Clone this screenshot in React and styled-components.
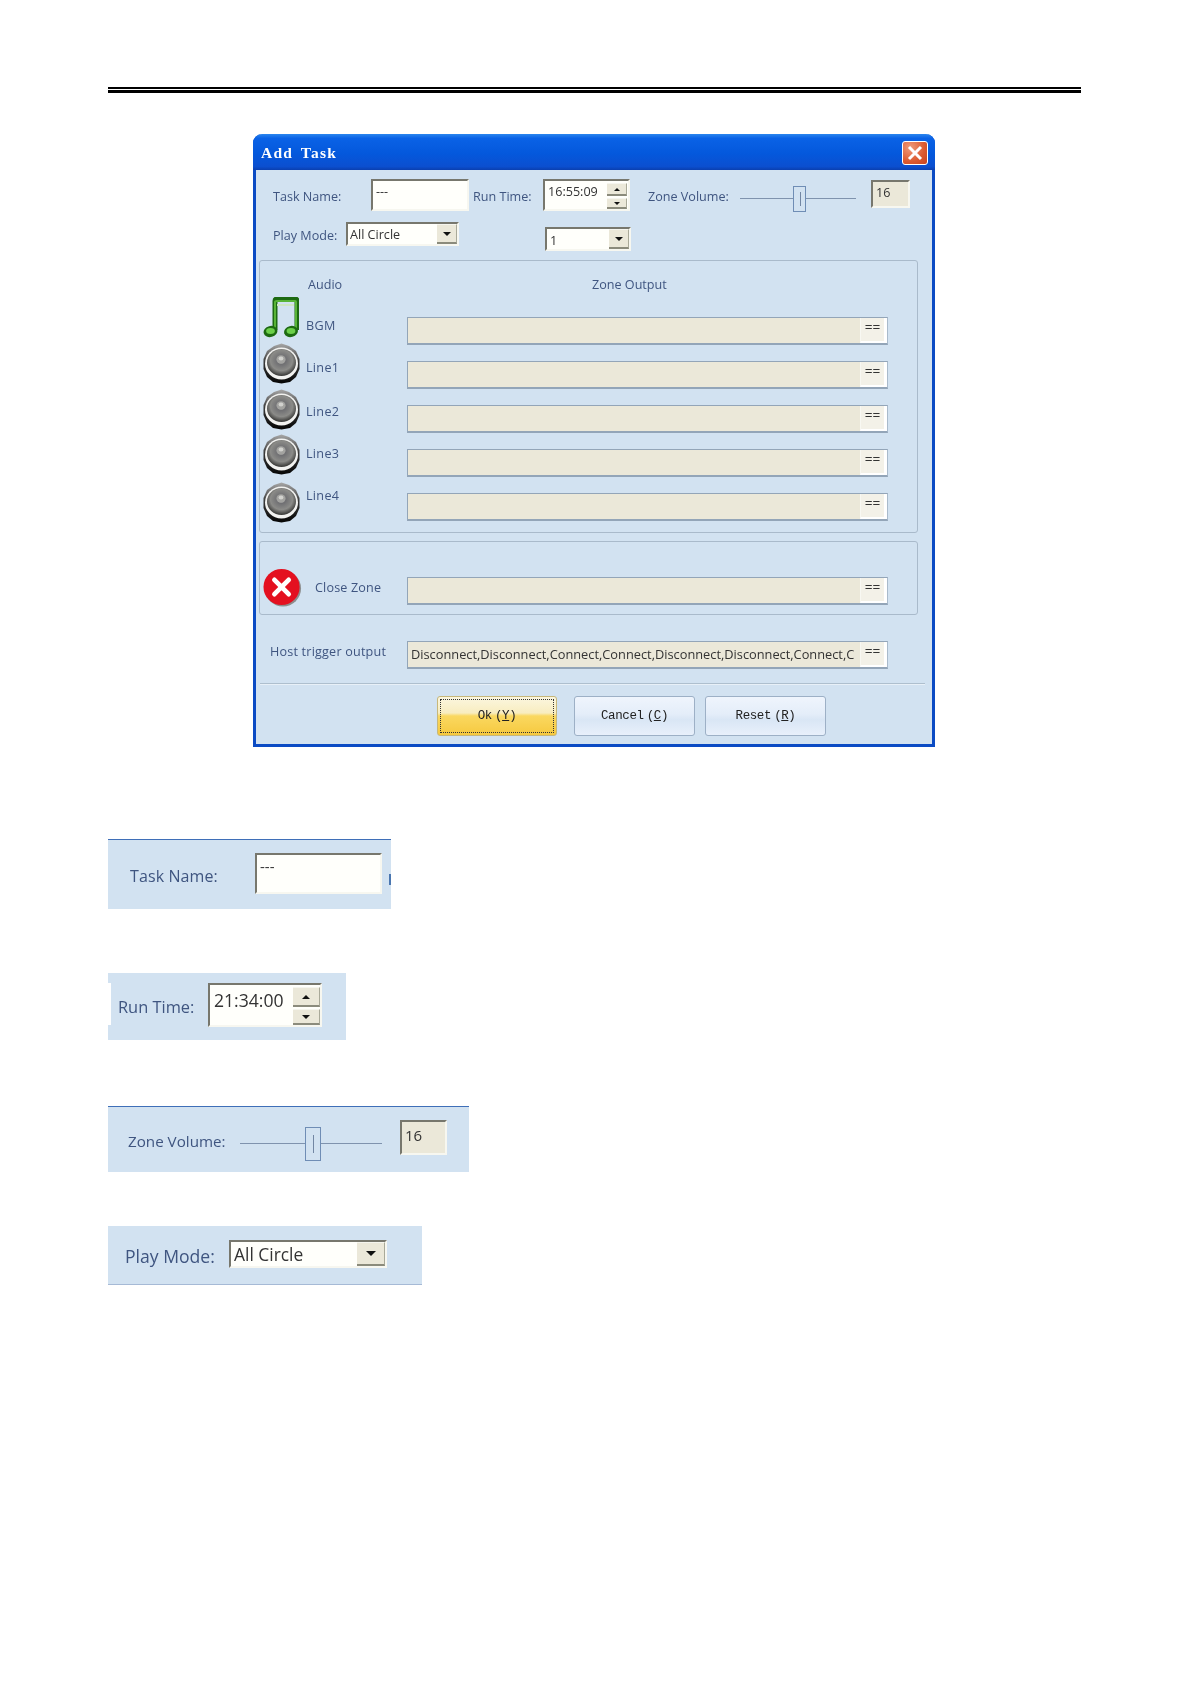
import styled, { createGlobalStyle } from 'styled-components';

const labelColor = '#3f5580';
const panelColor = '#d2e2f1';
const uiFont = '"Open Sans", "Noto Sans", sans-serif';

const GlobalStyle = createGlobalStyle`
    html, body {
        margin: 0;
        padding: 0;
        background: #fff;
    }
    body {
        font-family: ${uiFont};
    }
`;

const Page = styled.div`
    width: 1191px;
    height: 1684px;
    padding-top: 87px;
    box-sizing: border-box;
    overflow: hidden;
`;

const DoubleRule = styled.div`
    width: 973px;
    height: 6px;
    margin-left: 108px;
    border-top: 2px solid #000;
    border-bottom: 3px solid #000;
    box-sizing: border-box;
`;

const Window = styled.div`
    width: 682px;
    height: 613px;
    margin: 41px 0 0 253px;
    box-sizing: border-box;
    background: ${panelColor};
    border: 3px solid #0b4bc4;
    border-top: 0;
    border-radius: 9px 9px 0 0;
    filter: blur(0.4px);
`;

const TitleBar = styled.div`
    height: 36px;
    margin: 0 -3px;
    padding: 2px 7px 0 8px;
    box-sizing: border-box;
    display: flex;
    align-items: center;
    justify-content: space-between;
    border-radius: 9px 9px 0 0;
    background: linear-gradient(#2b86ee 0, #0a62e6 12%, #0458dc 55%, #0b4fd0 90%, #0a3fb0 100%);
`;

const Title = styled.span`
    font-family: "Liberation Serif", serif;
    font-weight: bold;
    font-size: 15.5px;
    letter-spacing: 1.2px;
    word-spacing: 3px;
    color: #fff;
    white-space: pre;
`;

const CloseButton = styled.div`
    width: 26px;
    height: 24px;
    box-sizing: border-box;
    border: 1px solid #fff;
    border-radius: 3px;
    background: radial-gradient(circle at 30% 25%, #ef9b7c, #dc5a30 60%, #c8431e);
    display: flex;
    align-items: center;
    justify-content: center;
`;

const Row = styled.div`
    display: flex;
    align-items: flex-start;
    box-sizing: border-box;
    height: ${({ $h }) => $h}px;
    padding-left: ${({ $pad }) => $pad || 0}px;
    padding-top: ${({ $pt }) => $pt || 0}px;
    margin-top: ${({ $mt }) => $mt || 0}px;
`;

const Label = styled.div`
    flex: none;
    width: ${({ $w }) => ($w ? `${$w}px` : 'auto')};
    margin-left: ${({ $ml }) => $ml || 0}px;
    margin-top: ${({ $mt }) => $mt || 0}px;
    font-size: ${({ $size }) => $size || 12.6}px;
    letter-spacing: ${({ $track }) => $track || 0}px;
    line-height: 16px;
    color: ${labelColor};
    white-space: nowrap;
`;

const Sunken = styled.div`
    flex: none;
    position: relative;
    box-sizing: border-box;
    width: ${({ $w }) => $w}px;
    height: ${({ $h }) => $h}px;
    margin-left: ${({ $ml }) => $ml || 0}px;
    margin-top: ${({ $mt }) => $mt || 0}px;
    padding: ${({ $pad }) => $pad || '3px 3px'};
    background: ${({ $readonly }) => ($readonly ? '#ebe8d9' : '#fffffb')};
    border-style: solid;
    border-width: 2px;
    border-color: #77776d #f7f7f0 #f7f7f0 #77776d;
    font-size: ${({ $size }) => $size || 12.6}px;
    line-height: ${({ $lh }) => $lh || 16}px;
    color: #333;
    white-space: nowrap;
    overflow: hidden;
`;

const RaisedButton = styled.div`
    position: absolute;
    right: ${({ $right }) => $right}px;
    top: ${({ $top }) => $top}px;
    width: ${({ $w }) => $w}px;
    height: ${({ $h }) => $h}px;
    box-sizing: border-box;
    background: #ebe8d9;
    border-bottom: 2px solid #8b8b7c;
    border-right: 1px solid #a9a998;
    border-top: 1px solid #f5f5ee;
    display: flex;
    align-items: center;
    justify-content: center;

    &::after {
        content: '';
        border-left: ${({ $arrow }) => $arrow}px solid transparent;
        border-right: ${({ $arrow }) => $arrow}px solid transparent;
        ${({ $up, $arrow }) =>
            $up
                ? `border-bottom: ${$arrow}px solid #111;`
                : `border-top: ${$arrow}px solid #111;`}
    }
`;

const Slider = styled.div`
    flex: none;
    position: relative;
    width: ${({ $w }) => $w}px;
    height: ${({ $h }) => $h}px;
    margin-left: ${({ $ml }) => $ml || 0}px;
    margin-top: ${({ $mt }) => $mt || 0}px;

    &::before {
        content: '';
        position: absolute;
        left: 0;
        right: 0;
        top: 48%;
        height: 1px;
        background: #7f93ae;
    }
`;

const SliderThumb = styled.div`
    position: absolute;
    left: ${({ $left }) => $left}px;
    top: 0;
    bottom: 0;
    width: ${({ $w }) => $w}px;
    box-sizing: border-box;
    background: ${panelColor};
    border: 1px solid #6f8db5;

    &::after {
        content: '';
        position: absolute;
        left: 50%;
        top: 22%;
        bottom: 22%;
        width: 1px;
        background: #7286a3;
    }
`;

const Group = styled.div`
    width: 659px;
    height: ${({ $h }) => $h}px;
    margin: ${({ $mt }) => $mt || 0}px 0 0 3px;
    box-sizing: border-box;
    border: 1px solid #a9bacb;
    border-radius: 3px;
    padding-top: ${({ $pt }) => $pt || 0}px;
`;

const GroupHeader = styled.div`
    display: flex;
    height: 36px;
    padding: 16px 0 0 48px;
    box-sizing: border-box;
`;

const Columns = styled.div`
    display: flex;
    align-items: flex-start;
`;

const IconColumn = styled.div`
    flex: none;
    width: 42px;
    padding-left: 3px;
    box-sizing: border-box;
    display: flex;
    flex-direction: column;
`;

const IconSlot = styled.div`
    display: flex;
    margin-top: ${({ $mt }) => $mt || 0}px;

    svg {
        display: block;
    }
`;

const LabelColumn = styled.div`
    flex: none;
    width: 105px;
    padding: 21px 0 0 4px;
    box-sizing: border-box;
    display: flex;
    flex-direction: column;
    gap: 26px;
`;

const FieldColumn = styled.div`
    flex: none;
    padding-top: 20px;
    display: flex;
    flex-direction: column;
    gap: 16px;
`;

const ZoneField = styled.div`
    flex: none;
    width: 481px;
    height: 28px;
    margin-left: ${({ $ml }) => $ml || 0}px;
    margin-top: ${({ $mt }) => $mt || 0}px;
    box-sizing: border-box;
    display: flex;
    background: #ebe8d9;
    border: 1px solid #93a5b8;
    border-bottom: 2px solid #93a5b8;
    border-right: 1px solid #a9bacb;
`;

const ZoneText = styled.div`
    flex: 1;
    min-width: 0;
    overflow: hidden;
    padding-left: 3px;
    font-size: 12.8px;
    line-height: 24px;
    color: #333;
    white-space: nowrap;
`;

const ZoneButton = styled.div`
    flex: none;
    width: 27px;
    font-family: "Liberation Mono", monospace;
    font-size: 13px;
    line-height: 20px;
    text-align: center;
    color: #333;
    background: #f3f1e8;
    border-left: 1px solid #f8f8f2;
    border-right: 3px solid #fff;
    border-bottom: 2px solid #fff;
    box-sizing: border-box;
`;

const Divider = styled.div`
    width: 665px;
    height: 2px;
    margin: 14px 0 0 4px;
    background: linear-gradient(#aebfce 50%, #e8f0f8 50%);
`;

const ButtonBar = styled.div`
    display: flex;
    margin-top: 11px;
    padding-left: 181px;
`;

const DialogButton = styled.div`
    width: ${({ $w }) => $w}px;
    height: 40px;
    margin-left: ${({ $ml }) => $ml || 0}px;
    box-sizing: border-box;
    border: 1px solid ${({ $primary }) => ($primary ? '#c7b77a' : '#9db0c6')};
    border-radius: 3px;
    padding: 2px;
    background: ${({ $primary }) =>
        $primary
            ? 'linear-gradient(#fbf6df 0, #f8edc0 42%, #fad860 50%, #f6c93f 100%)'
            : 'linear-gradient(#eff5fd 0, #e4edf9 45%, #d9e6f5 60%, #e8f0fb 100%)'};
    font-family: "Liberation Mono", monospace;
    font-size: 12.5px;
    letter-spacing: -0.4px;
    word-spacing: -4px;
    color: #222;
`;

const ButtonFace = styled.div`
    height: 100%;
    box-sizing: border-box;
    display: flex;
    align-items: center;
    justify-content: center;
    white-space: pre;
    border: 1px dotted ${({ $focus }) => ($focus ? '#333' : 'transparent')};
`;

const CropPanel = styled.div`
    width: ${({ $w }) => $w}px;
    height: ${({ $h }) => $h}px;
    margin: ${({ $mt }) => $mt}px 0 0 108px;
    padding-left: ${({ $pad }) => $pad}px;
    box-sizing: border-box;
    display: flex;
    align-items: flex-start;
    background: ${panelColor};
    border-top: ${({ $line }) => ($line ? '1px solid #3f6fb8' : '0')};
    border-bottom: ${({ $under }) => ($under ? '1px solid #a6bad6' : '0')};
    position: relative;
    filter: blur(0.6px);
`;

const EdgeTick = styled.div`
    position: absolute;
    right: 0;
    top: 34px;
    width: 2px;
    height: 11px;
    background: #4a76b0;
`;

const EdgeNotch = styled.div`
    position: absolute;
    left: 0;
    top: 10px;
    width: 3px;
    height: 42px;
    background: #fff;
`;

const NoteIcon = () => (
    <svg width="36" height="41" viewBox="0 0 36 41">
        <path
            d="M12 33 V4 Q12 2 14 2 H32 Q34 2 34 4 V33"
            fill="none"
            stroke="#1d6a12"
            strokeWidth="5"
        />
        <path d="M12 33 V5 Q12 4 14 4 H32 Q33 4 33 5 V33" fill="none" stroke="#58b437" strokeWidth="2" />
        <rect x="14" y="7" width="17" height="2" fill="#cfe6c4" />
        <ellipse cx="7.5" cy="34.5" rx="7" ry="5.5" fill="#1d6a12" transform="rotate(-15 7.5 34.5)" />
        <ellipse cx="28" cy="34.5" rx="7" ry="5.5" fill="#1d6a12" transform="rotate(-15 28 34.5)" />
        <ellipse cx="7.5" cy="34" rx="4.4" ry="3" fill="#6cd04a" />
        <ellipse cx="28" cy="34" rx="4.4" ry="3" fill="#6cd04a" />
    </svg>
);

const SpeakerIcon = () => (
    <svg width="37" height="41" viewBox="0 0 37 41">
        <defs>
            <linearGradient id="speakerRim" x1="0" y1="0" x2="0" y2="1">
                <stop offset="0" stopColor="#a8a8a8" />
                <stop offset="0.45" stopColor="#3a3a3a" />
                <stop offset="1" stopColor="#050505" />
            </linearGradient>
            <radialGradient id="speakerCone" cx="0.5" cy="0.42" r="0.56">
                <stop offset="0" stopColor="#bcbcb9" />
                <stop offset="0.26" stopColor="#6f6f72" />
                <stop offset="0.68" stopColor="#8b8b88" />
                <stop offset="1" stopColor="#3e3e3c" />
            </radialGradient>
        </defs>
        <path
            d="M18.5 0.5 L26 3 L33 8 L36.5 16 L36.5 26 L33 34 L27 39 L18.5 40.5 L10 39 L4 34 L0.5 26 L0.5 16 L4 8 L11 3 Z"
            fill="url(#speakerRim)"
        />
        <ellipse cx="18.5" cy="20.5" rx="16.5" ry="16" fill="#f2f2f0" />
        <ellipse cx="18.5" cy="19.5" rx="14.5" ry="13.5" fill="url(#speakerCone)" />
        <ellipse cx="18" cy="16.5" rx="4.6" ry="4.2" fill="#a3a3a0" />
        <ellipse cx="18" cy="15.5" rx="2.4" ry="2" fill="#d2d2ce" />
    </svg>
);

const CloseZoneIcon = () => (
    <svg width="41" height="41" viewBox="0 0 41 41">
        <circle cx="21" cy="21.5" r="19" fill="#8d8d8d" />
        <circle cx="19.5" cy="20" r="19" fill="#e41020" />
        <path d="M12 12.5 L27 27.5 M27 12.5 L12 27.5" stroke="#fff" strokeWidth="5" strokeLinecap="round" />
    </svg>
);

const audioRows = ['BGM', 'Line1', 'Line2', 'Line3', 'Line4'];
const speakerOffsets = [5, 5, 4, 7];
const triggerText = 'Disconnect,Disconnect,Connect,Connect,Disconnect,Disconnect,Connect,C';

const ZoneBox = ({ text, ...props }) => (
    <ZoneField {...props}>
        <ZoneText>{text}</ZoneText>
        <ZoneButton>==</ZoneButton>
    </ZoneField>
);

export default function App() {
    return (
        <Page>
            <GlobalStyle />
            <DoubleRule />

            <Window>
                <TitleBar>
                    <Title>Add Task</Title>
                    <CloseButton>
                        <svg width="16" height="16" viewBox="0 0 16 16">
                            <path d="M2 2 L14 14 M14 2 L2 14" stroke="#fff" strokeWidth="3" />
                        </svg>
                    </CloseButton>
                </TitleBar>

                <Row $h={52} $pad={17} $pt={9}>
                    <Label $w={98} $mt={10}>Task Name:</Label>
                    <Sunken $w={98} $h={32}>---</Sunken>
                    <Label $w={70} $ml={4} $mt={10}>Run Time:</Label>
                    <Sunken $w={87} $h={32}>
                        16:55:09
                        <RaisedButton $up $right={1} $top={2} $w={20} $h={13} $arrow={3} />
                        <RaisedButton $right={1} $top={17} $w={20} $h={11} $arrow={3} />
                    </Sunken>
                    <Label $w={92} $ml={18} $mt={10}>Zone Volume:</Label>
                    <Slider $w={116} $h={26} $mt={7}>
                        <SliderThumb $left={53} $w={13} />
                    </Slider>
                    <Sunken $w={39} $h={28} $ml={15} $mt={1} $readonly>16</Sunken>
                </Row>

                <Row $h={38} $pad={17}>
                    <Label $w={73} $mt={6}>Play Mode:</Label>
                    <Sunken $w={113} $h={24} $pad="3px 2px">
                        All Circle
                        <RaisedButton $right={0} $top={0} $w={20} $h={20} $arrow={4} />
                    </Sunken>
                    <Sunken $w={86} $h={24} $ml={86} $mt={5} $pad="4px 3px">
                        1
                        <RaisedButton $right={0} $top={0} $w={20} $h={20} $arrow={4} />
                    </Sunken>
                </Row>

                <Group $h={273}>
                    <GroupHeader>
                        <Label $w={284}>Audio</Label>
                        <Label>Zone Output</Label>
                    </GroupHeader>
                    <Columns>
                        <IconColumn>
                            <IconSlot><NoteIcon /></IconSlot>
                            {speakerOffsets.map((offset, i) => (
                                <IconSlot key={i} $mt={offset}><SpeakerIcon /></IconSlot>
                            ))}
                        </IconColumn>
                        <LabelColumn>
                            {audioRows.map((name) => (
                                <Label key={name} $track={0.3} $mt={name === 'Line2' ? 2 : 0}>{name}</Label>
                            ))}
                        </LabelColumn>
                        <FieldColumn>
                            {audioRows.map((name) => (
                                <ZoneBox key={name} />
                            ))}
                        </FieldColumn>
                    </Columns>
                </Group>

                <Group $h={74} $mt={8} $pt={25}>
                    <Columns>
                        <IconColumn>
                            <IconSlot><CloseZoneIcon /></IconSlot>
                        </IconColumn>
                        <Label $w={92} $ml={13} $mt={13} $track={0.15}>Close Zone</Label>
                        <ZoneBox $mt={10} />
                    </Columns>
                </Group>

                <Row $h={28} $pad={14} $mt={26}>
                    <Label $w={137} $mt={3} $track={0.2}>Host trigger output</Label>
                    <ZoneBox text={triggerText} />
                </Row>

                <Divider />

                <ButtonBar>
                    <DialogButton $w={120} $primary>
                        <ButtonFace $focus>Ok (<u>Y</u>)</ButtonFace>
                    </DialogButton>
                    <DialogButton $w={121} $ml={17}>
                        <ButtonFace>Cancel (<u>C</u>)</ButtonFace>
                    </DialogButton>
                    <DialogButton $w={121} $ml={10}>
                        <ButtonFace>Reset (<u>R</u>)</ButtonFace>
                    </DialogButton>
                </ButtonBar>
            </Window>

            <CropPanel $w={283} $h={70} $mt={92} $pad={22} $line>
                <Label $w={125} $size={16} $mt={28} $track={0.1}>Task Name:</Label>
                <Sunken $w={127} $h={41} $mt={13} $size={15} $lh={14} $pad="4px 3px">---</Sunken>
                <EdgeTick />
            </CropPanel>

            <CropPanel $w={238} $h={67} $mt={64} $pad={10}>
                <EdgeNotch />
                <Label $w={90} $size={16.4} $mt={26}>Run Time:</Label>
                <Sunken $w={114} $h={44} $mt={10} $size={17.6} $lh={22} $pad="4px 4px">
                    21:34:00
                    <RaisedButton $up $right={0} $top={2} $w={27} $h={20} $arrow={4} />
                    <RaisedButton $right={0} $top={24} $w={27} $h={16} $arrow={4} />
                </Sunken>
            </CropPanel>

            <CropPanel $w={361} $h={66} $mt={66} $pad={20} $line>
                <Label $w={112} $size={15.2} $mt={26}>Zone Volume:</Label>
                <Slider $w={142} $h={34} $mt={20}>
                    <SliderThumb $left={65} $w={16} />
                </Slider>
                <Sunken $w={47} $h={35} $ml={18} $mt={13} $size={15} $pad="5px 3px" $readonly>16</Sunken>
            </CropPanel>

            <CropPanel $w={314} $h={59} $mt={54} $pad={17} $under>
                <Label $w={104} $size={17.6} $mt={22}>Play Mode:</Label>
                <Sunken $w={158} $h={28} $mt={14} $size={17.4} $lh={20} $pad="2px 3px">
                    All Circle
                    <RaisedButton $right={0} $top={0} $w={28} $h={24} $arrow={5} />
                </Sunken>
            </CropPanel>
        </Page>
    );
}
